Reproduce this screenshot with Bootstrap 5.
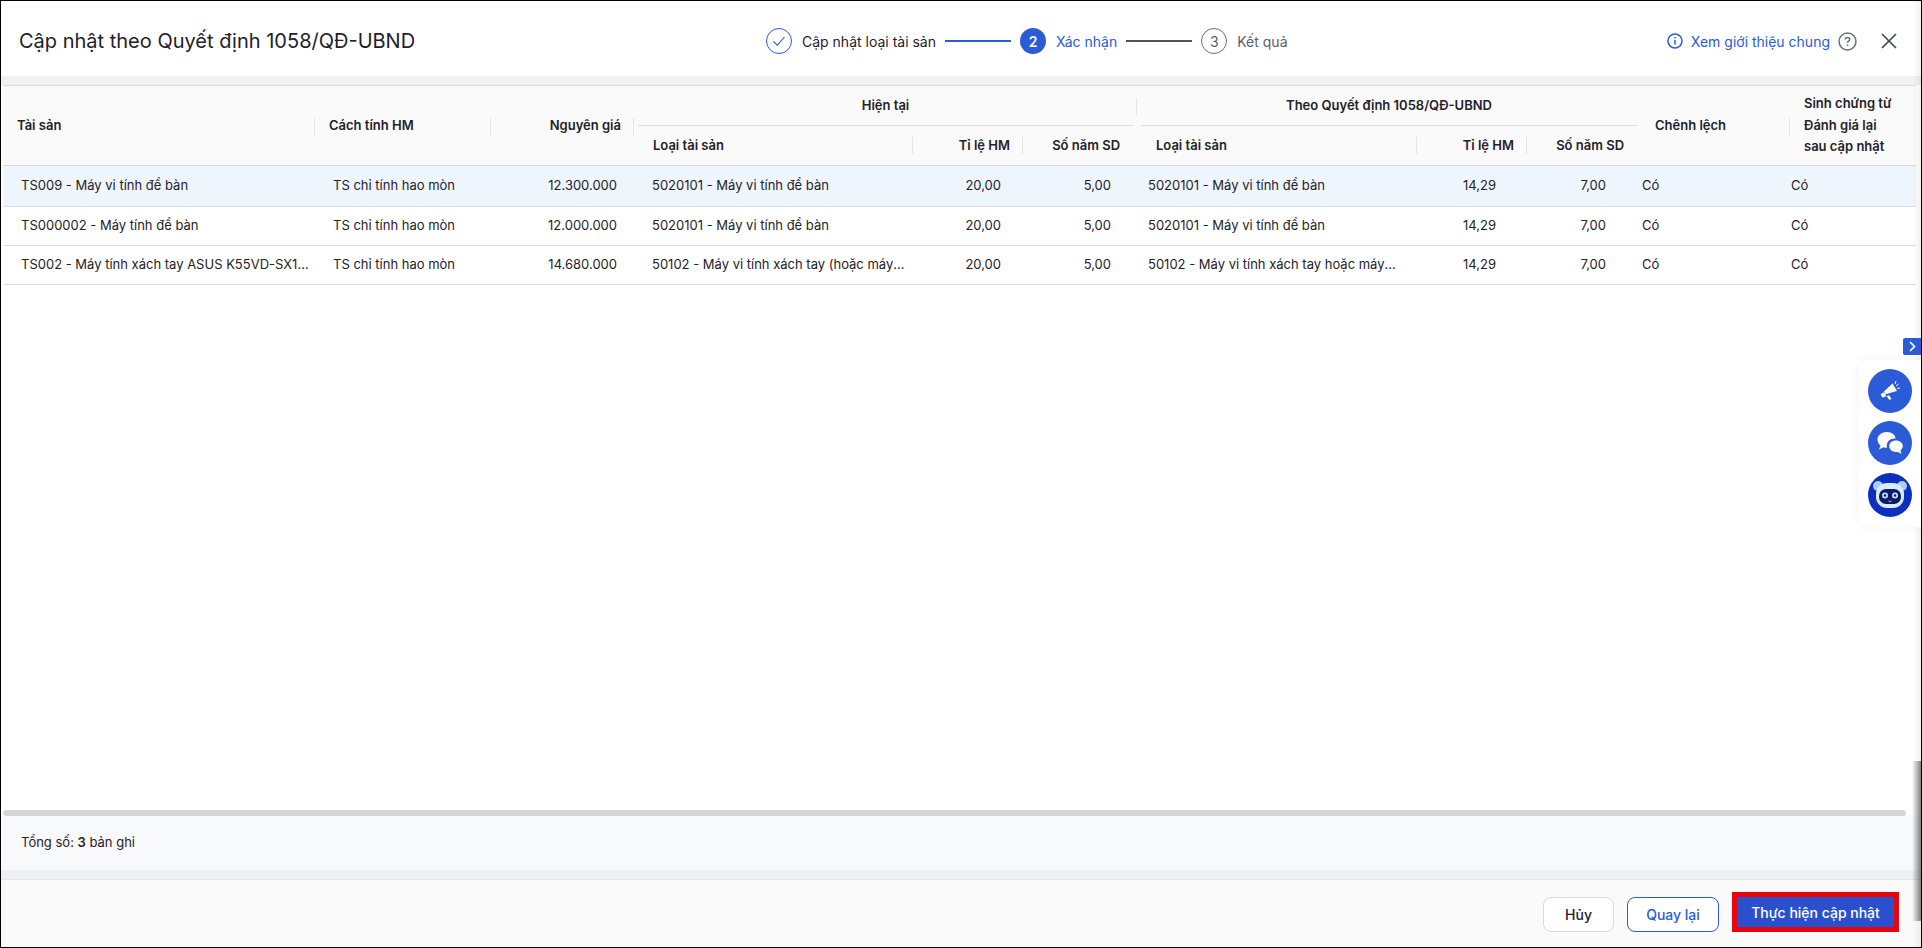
<!DOCTYPE html>
<html lang="vi">

<head>
  <meta charset="UTF-8" />
  <meta name="viewport" content="width=device-width, initial-scale=1.0" />
  <title>Cập nhật theo Quyết định 1058/QĐ-UBND</title>
  <link href="https://cdn.jsdelivr.net/npm/bootstrap@5.3.3/dist/css/bootstrap.min.css" rel="stylesheet" />
  <style>
    html, body { height: 100%; overflow: hidden; }
    body { font-family: Inter, "Noto Sans", sans-serif; font-size: 13px; color: #1f2229; background: #fff; }
    .app-frame { height: 948px; border: 1px solid #000; border-right-width: 1px; position: relative; overflow: hidden; }

    /* header */
    .page-head { height: 75px; padding: 5px 24px 0 18px; }
    .page-title { width: 747px; font-size: 20px; font-weight: 400; margin: 0; }
    .step-dot { width: 26px; height: 26px; border-radius: 50%; font-size: 14px; flex: none; }
    .step-done { border: 1px solid #2b5bd7; }
    .step-now { background: #2b5bd7; color: #fff; font-weight: 600; }
    .step-next { border: 1px solid #6b6f78; color: #5b5f68; }
    .step-text { font-size: 14px; margin-left: 10px; white-space: nowrap; }
    .step-line { width: 66px; height: 2px; background: #2b5bd7; margin: 0 9px; }
    .step-line-gray { background: #4f5560; }
    .intro-link { color: #2b5bd7; font-size: 14px; text-decoration: none; }

    /* grey band and table */
    .band { height: 9px; background: #f0f1f3; }
    .table-area { background: #fff; flex: 1 1 auto; padding-left: 2px; min-height: 0; }
    .asset-grid { table-layout: fixed; width: 1913px; border-collapse: collapse; }
    .asset-grid th { background: #fafafa; font-weight: 600; font-size: 13px; padding: 0 14px; position: relative; white-space: nowrap; vertical-align: middle; }
    .asset-grid thead { border-top: 1px solid #d9dbde; border-bottom: 1px solid #d9dbde; }
    .asset-grid thead tr { height: 40px; }
    .asset-grid td { padding: 0 18px; border-bottom: 1px solid #dcdee1; white-space: nowrap; overflow: hidden; text-overflow: ellipsis; }
    .asset-grid tbody tr { height: 39px; }
    .asset-grid tbody tr.row-active { height: 41px; }
    .asset-grid tr.row-active td { background: #eef5fd; }
    .th-sep::after { content: ""; position: absolute; right: 0; top: 50%; width: 1px; height: 17px; margin-top: -8px; background: #e3e4e7; }
    .th-group::before { content: ""; position: absolute; left: 4px; right: 3px; bottom: 0; height: 1px; background: #dcdee1; }
    .th-wrap { white-space: normal !important; line-height: 21.5px; }
    .head-r { padding-right: 13px !important; }
    .head-r17 { padding-right: 17px !important; }
    .head-l19 { padding-left: 19px !important; }
    .cell-r17 { padding-right: 17px !important; }
    .cell-r22 { padding-right: 22px !important; }
    .cell-r26 { padding-right: 26px !important; }
    .cell-r31 { padding-right: 31px !important; }
    .cell-r35 { padding-right: 35px !important; }
    .cell-l11 { padding-left: 11px !important; padding-right: 20px !important; }
    .cell-l1 { padding-left: 1px !important; }
    .cell-cut { padding-right: 6px !important; }

    /* bottom */
    .h-scroll { height: 6px; margin: 0 15px 0 2px; background: #d5d6d9; border-radius: 3px; }
    .total-bar { height: 54px; background: #f8f9fb; padding-left: 20px; }
    .band-bottom { height: 10px; background: #f0f1f3; border-bottom: 1px solid #e4e5e8; }
    .action-bar { height: 67px; background: #fafafa; padding: 17px 22px 0 0; }
    .btn-plain, .btn-back, .btn-run { font-size: 14px; font-weight: 500; height: 35px; padding: 0; border-radius: 8px; }
    .btn-plain { width: 71px; background: #fff; border: 1px solid #d8d9dc; color: #1f2229; }
    .btn-back { width: 92px; margin-left: 13px; background: #fff; border: 1px solid #2b5bd7; color: #2b5bd7; }
    .btn-mark { margin-left: 13px; margin-top: -5px; border: 5px solid #e8060c; height: 40px; }
    .btn-run { display: block; width: 157px; height: 30px; border: 0; border-radius: 0; background: #2b50ce; color: #fff; font-weight: 500; }

    /* overlays on the right edge */
    .edge-shade { position: absolute; top: 0; bottom: 0; right: 0; width: 8px; background: linear-gradient(to right, rgba(0,0,0,0), rgba(0,0,0,.06)); pointer-events: none; }
    .edge-shade-dark { position: absolute; top: 760px; height: 160px; right: 0; width: 9px; background: linear-gradient(to right, rgba(0,0,0,0), rgba(0,0,0,.45)); pointer-events: none; }
    .side-toggle { position: absolute; top: 337px; right: 0; width: 18px; height: 17px; background: #2b5bd7; border-radius: 2px 0 0 2px; }
    .side-panel { position: absolute; top: 359px; right: 0; width: 62px; height: 167px; background: #fff; border-radius: 8px 0 0 8px; box-shadow: 0 0 10px rgba(0,0,0,.06); padding: 9px 0 0 9px; gap: 8px; }
    .side-btn { width: 44px; height: 44px; border-radius: 50%; background: #2b5bd7; }
    .side-btn-dark { background: #0b30c0; }
  </style>
</head>

<body>
  <div class="app-frame d-flex flex-column">

    <!-- Header -->
    <div class="page-head d-flex align-items-center">
      <h1 class="page-title">Cập nhật theo Quyết định 1058/QĐ-UBND</h1>
      <div class="d-flex align-items-center">
        <span class="step-dot step-done d-flex align-items-center justify-content-center">
          <svg width="16" height="16" viewBox="0 0 16 16" fill="none" stroke="#2b5bd7" stroke-width="1.1"><path d="M2.5 8.5 6.3 12.2 13.5 4" /></svg>
        </span>
        <span class="step-text">Cập nhật loại tài sản</span>
        <span class="step-line"></span>
        <span class="step-dot step-now d-flex align-items-center justify-content-center">2</span>
        <span class="step-text" style="color:#2b5bd7">Xác nhận</span>
        <span class="step-line step-line-gray"></span>
        <span class="step-dot step-next d-flex align-items-center justify-content-center">3</span>
        <span class="step-text" style="color:#5b5f68">Kết quả</span>
      </div>
      <div class="ms-auto d-flex align-items-center">
        <svg width="16" height="16" viewBox="0 0 16 16" fill="none" stroke="#2b5bd7" stroke-width="1.5"><circle cx="8" cy="8" r="7" /><path d="M8 7v4.5M8 4v1.6" /></svg>
        <a href="#" class="intro-link ms-2">Xem giới thiệu chung</a>
        <svg class="ms-2" width="19" height="19" viewBox="0 0 19 19" fill="none" stroke="#6b6f78" stroke-width="1.5"><circle cx="9.5" cy="9.5" r="8.5" /><path d="M7.3 7.6c0-1.3 1-2.1 2.2-2.1s2.2.8 2.2 2c0 1.6-2.2 1.7-2.2 3.3M9.5 12.4v1.5" /></svg>
        <svg class="ms-4" width="16" height="16" viewBox="0 0 16 16" fill="none" stroke="#454a54" stroke-width="1.7"><path d="M1 1l14 14M15 1 1 15" /></svg>
      </div>
    </div>

    <div class="band"></div>

    <!-- Bảng tài sản -->
    <div class="table-area">
      <table class="asset-grid">
        <colgroup>
          <col style="width:312px"><col style="width:176px"><col style="width:143px">
          <col style="width:279px"><col style="width:110px"><col style="width:114px">
          <col style="width:280px"><col style="width:110px"><col style="width:114px">
          <col style="width:149px"><col style="width:126px">
        </colgroup>
        <thead>
          <tr>
            <th rowspan="2" class="th-sep">Tài sản</th>
            <th rowspan="2" class="th-sep">Cách tính HM</th>
            <th rowspan="2" class="th-sep text-end head-r">Nguyên giá</th>
            <th colspan="3" class="th-sep th-group text-center">Hiện tại</th>
            <th colspan="3" class="th-group text-center">Theo Quyết định 1058/QĐ-UBND</th>
            <th rowspan="2" class="th-sep">Chênh lệch</th>
            <th rowspan="2" class="th-wrap">Sinh chứng từ Đánh giá lại sau cập nhật</th>
          </tr>
          <tr>
            <th class="th-sep head-l19">Loại tài sản</th>
            <th class="th-sep text-end head-r">Tỉ lệ HM</th>
            <th class="text-end head-r17">Số năm SD</th>
            <th class="th-sep head-l19">Loại tài sản</th>
            <th class="th-sep text-end head-r">Tỉ lệ HM</th>
            <th class="text-end head-r17">Số năm SD</th>
          </tr>
        </thead>
        <tbody id="asset-rows"></tbody>
      </table>
    </div>

    <div class="h-scroll"></div>
    <div class="total-bar d-flex align-items-center">Tổng số:&nbsp;<b class="fw-semibold">3</b>&nbsp;bản ghi</div>
    <div class="band-bottom"></div>

    <!-- Nút -->
    <div class="action-bar d-flex justify-content-end align-items-start">
      <button type="button" class="btn btn-plain">Hủy</button>
      <button type="button" class="btn btn-back">Quay lại</button>
      <div class="btn-mark"><button type="button" class="btn btn-run">Thực hiện cập nhật</button></div>
    </div>

    <!-- Thanh nổi bên phải -->
    <div class="edge-shade"></div>
    <div class="edge-shade-dark"></div>
    <div class="side-toggle d-flex align-items-center justify-content-center">
      <svg width="10" height="11" viewBox="0 0 10 11" fill="none" stroke="#fff" stroke-width="1.7"><path d="M3 1l4.5 4.5L3 10" /></svg>
    </div>
    <div class="side-panel d-flex flex-column">
      <div class="side-btn d-flex align-items-center justify-content-center">
        <svg width="26" height="26" viewBox="0 0 26 26" fill="#fff">
          <path d="M15.5 5.5 20 13l-2 .6-9.5 2.6-1.6-2.6 7-6.5z" />
          <path d="M4.5 15.5 7 14.2l2.4 3.8-2.6 1.3a1.4 1.4 0 0 1-1.9-.5l-.9-1.6a1.3 1.3 0 0 1 .5-1.7z" />
          <path d="M9.5 18l2.6-.7 2.4 3.4-2.2 1.2z" />
          <path d="M19 3l-1 3M21.500 6l-2.500 2M23 10l-3 .5" stroke="#fff" stroke-width="1" fill="none" />
        </svg>
      </div>
      <div class="side-btn d-flex align-items-center justify-content-center">
        <svg width="30" height="30" viewBox="0 0 30 30" fill="#fff">
          <path d="M12 4c5 0 8.500 3.200 8.600 6.500-4.600-.6-9 2.500-8.800 7.400 0 .7.100 1.300.3 1.900H12c-1.200 0-2.400-.2-3.400-.6L4 21.500l1.500-4C3.500 15.900 2.500 13.800 2.500 11.500 2.500 7.300 6.700 4 12 4z" />
          <path d="M21 12.500c4 0 6.800 2.500 6.800 5.600 0 1.800-.9 3.300-2.400 4.400l1.200 3.300-4-1.900c-.5.100-1.100.1-1.600.1-4 0-6.800-2.600-6.800-5.900s2.800-5.600 6.800-5.600z" />
        </svg>
      </div>
      <div class="side-btn side-btn-dark d-flex align-items-center justify-content-center">
        <svg width="36" height="30" viewBox="0 0 36 30">
          <circle cx="6" cy="6" r="5" fill="#a9cdf5" />
          <circle cx="30" cy="6" r="5" fill="#a9cdf5" />
          <rect x="4" y="3" width="28" height="25" rx="11" fill="#dcebfb" />
          <rect x="7" y="9" width="22" height="15" rx="7" fill="#0c1c66" />
          <circle cx="13" cy="15.500" r="3" fill="#cfe0f7" />
          <circle cx="23" cy="15.500" r="3" fill="#cfe0f7" />
          <circle cx="13" cy="15.500" r="1.300" fill="#0c1c66" />
          <circle cx="23" cy="15.500" r="1.300" fill="#0c1c66" />
          <path d="M16.500 21q1.500 1 3 0" stroke="#cfe0f7" stroke-width=".8" fill="none" />
        </svg>
      </div>
    </div>
  </div>

  <script>
    const rows = [
      ["TS009 - Máy vi tính để bàn", "12.300.000", "5020101 - Máy vi tính để bàn", "5020101 - Máy vi tính để bàn"],
      ["TS000002 - Máy tính để bàn", "12.000.000", "5020101 - Máy vi tính để bàn", "5020101 - Máy vi tính để bàn"],
      ["TS002 - Máy tính xách tay ASUS K55VD-SX123", "14.680.000", "50102 - Máy vi tính xách tay (hoặc máy tính bảng)", "50102 - Máy vi tính xách tay hoặc máy tính bảng"]
    ];
    document.getElementById("asset-rows").innerHTML = rows.map((r, i) => `
      <tr class="${i === 0 ? 'row-active' : ''}">
        <td class="cell-cut">${r[0]}</td>
        <td>TS chỉ tính hao mòn</td>
        <td class="text-end cell-r17">${r[1]}</td>
        <td class="cell-cut">${r[2]}</td>
        <td class="text-end cell-r22">20,00</td>
        <td class="text-end cell-r26">5,00</td>
        <td class="cell-l11">${r[3]}</td>
        <td class="text-end cell-r31">14,29</td>
        <td class="text-end cell-r35">7,00</td>
        <td class="cell-l1">Có</td>
        <td class="cell-l1">Có</td>
      </tr>`).join("");
  </script>
  <script src="https://cdn.jsdelivr.net/npm/bootstrap@5.3.3/dist/js/bootstrap.bundle.min.js"></script>
</body>

</html>
